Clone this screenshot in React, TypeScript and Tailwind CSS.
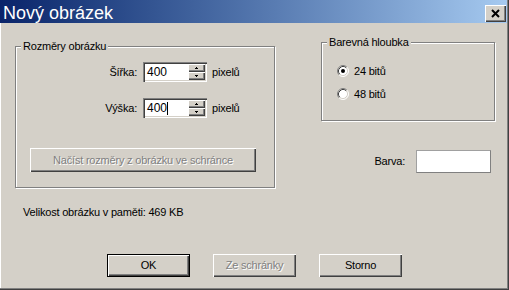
import React from "react";

const raised =
  "bg-[#d4d0c8] shadow-[inset_1px_1px_0_#fff,inset_-1px_-1px_0_#404040,inset_-2px_-2px_0_#808080]";
const sunken =
  "shadow-[inset_1px_1px_0_#808080,inset_2px_2px_0_#404040,inset_-1px_-1px_0_#fff,inset_-2px_-2px_0_#d4d0c8]";
const disabledText = "text-[#808080] [text-shadow:1px_1px_0_#fff]";

function Arrow({ up }: { up?: boolean }) {
  return (
    <svg width="3" height="2" viewBox="0 0 3 2" shapeRendering="crispEdges">
      {up ? (
        <>
          <rect x="1" y="0" width="1" height="1" fill="#000" />
          <rect x="0" y="1" width="3" height="1" fill="#000" />
        </>
      ) : (
        <>
          <rect x="0" y="0" width="3" height="1" fill="#000" />
          <rect x="1" y="1" width="1" height="1" fill="#000" />
        </>
      )}
    </svg>
  );
}

function SpinField({ value, caret }: { value: string; caret?: boolean }) {
  return (
    <div className={`w-[64px] h-[20px] bg-white p-[2px] flex ${sunken}`}>
      <div className="flex-1 flex items-center pl-[2px] text-[12px] tracking-normal">
        <span>{value}</span>
        {caret && <span className="w-px h-[13px] bg-black" />}
      </div>
      <div className="w-[17px] flex flex-col">
        <div className={`h-[8px] flex items-center justify-center ${raised}`}>
          <Arrow up />
        </div>
        <div className={`h-[8px] flex items-center justify-center ${raised}`}>
          <Arrow />
        </div>
      </div>
    </div>
  );
}

function Radio({ checked }: { checked?: boolean }) {
  return (
    <svg width="12" height="12" viewBox="0 0 12 12">
      <circle cx="6" cy="6" r="5" fill="#fff" />
      <path d="M2.11 9.89 A5.5 5.5 0 0 1 9.89 2.11" fill="none" stroke="#808080" />
      <path d="M9.89 2.11 A5.5 5.5 0 0 1 2.11 9.89" fill="none" stroke="#fff" />
      <path d="M2.82 9.18 A4.5 4.5 0 0 1 9.18 2.82" fill="none" stroke="#404040" />
      <path d="M9.18 2.82 A4.5 4.5 0 0 1 2.82 9.18" fill="none" stroke="#d4d0c8" />
      {checked && <circle cx="6" cy="6" r="2" fill="#000" />}
    </svg>
  );
}

function Group({
  title,
  className,
  children,
}: {
  title: string;
  className: string;
  children: React.ReactNode;
}) {
  return (
    <div
      className={`relative border border-[#808080] shadow-[inset_1px_1px_0_#fff,1px_1px_0_#fff] ${className}`}
    >
      <span className="absolute -top-[7px] left-[5px] px-[2px] bg-[#d4d0c8] leading-[13px]">
        {title}
      </span>
      {children}
    </div>
  );
}

function Button({
  label,
  isDefault,
  disabled,
}: {
  label: string;
  isDefault?: boolean;
  disabled?: boolean;
}) {
  return (
    <div
      className={`w-[83px] h-[23px] flex items-center justify-center ${
        isDefault ? "border border-black" : ""
      } ${raised} ${disabled ? disabledText : ""}`}
    >
      {label}
    </div>
  );
}

export default function App() {
  return (
    <div className="w-[509px] h-[290px] bg-[#d4d0c8] flex flex-col font-['Liberation_Sans',Arial,sans-serif] text-[11px] tracking-[-0.2px] text-black overflow-hidden shadow-[inset_-1px_-1px_0_#404040,inset_-2px_-2px_0_#808080,inset_1px_0_0_#fff]">
      {/* title bar */}
      <div className="h-[23px] mr-[2px] flex items-start justify-between bg-linear-to-r from-[#0a246a] to-[#a6caf0] pl-[3px] pr-[1px]">
        <span className="mt-[4px] text-white text-[18px] leading-[18px] tracking-normal">
          Nový obrázek
        </span>
        <div className={`mt-[5px] w-[21px] h-[17px] flex items-center justify-center ${raised}`}>
          <svg width="9" height="9" viewBox="0 0 9 9">
            <path d="M1 1 L8 8 M8 1 L1 8" stroke="#000" strokeWidth="2" />
          </svg>
        </div>
      </div>

      <div className="flex-1 flex flex-col pl-[15px]">
        <div className="flex items-start">
          <Group title="Rozměry obrázku" className="mt-[23px] w-[260px] h-[142px] pt-[15px]">
            <div className="flex flex-col gap-[16px]">
              <div className="flex items-center h-[20px]">
                <span className="w-[121px] text-right">Šířka:</span>
                <div className="ml-[6px]">
                  <SpinField value="400" />
                </div>
                <span className="ml-[5px]">pixelů</span>
              </div>
              <div className="flex items-center h-[20px]">
                <span className="w-[121px] text-right">Výška:</span>
                <div className="ml-[6px]">
                  <SpinField value="400" caret />
                </div>
                <span className="ml-[5px]">pixelů</span>
              </div>
            </div>
            <div
              className={`mt-[30px] ml-[14px] w-[226px] h-[24px] flex items-center justify-center ${raised} ${disabledText}`}
            >
              Načíst rozměry z obrázku ve schránce
            </div>
          </Group>

          <div className="ml-[46px] mt-[19px] flex flex-col">
            <Group title="Barevná hloubka" className="w-[174px] h-[79px] pt-[20px] pl-[15px]">
              <div className="flex flex-col gap-[7px]">
                <div className="flex items-center h-[16px] gap-[5px]">
                  <Radio checked />
                  <span>24 bitů</span>
                </div>
                <div className="flex items-center h-[16px] gap-[5px]">
                  <Radio />
                  <span>48 bitů</span>
                </div>
              </div>
            </Group>
            <div className="mt-[29px] flex items-center">
              <span className="w-[84px] text-right">Barva:</span>
              <div className="ml-[11px] w-[75px] h-[23px] bg-white border border-[#a0a0a0] border-r-[#808080] border-b-[#808080]" />
            </div>
          </div>
        </div>

        <div className="mt-[18px] pl-[8px] leading-[13px]">Velikost obrázku v paměti: 469 KB</div>

        <div className="mt-[35px] ml-[92px] flex gap-[23px]">
          <Button label="OK" isDefault />
          <Button label="Ze schránky" disabled />
          <Button label="Storno" />
        </div>
      </div>
    </div>
  );
}
